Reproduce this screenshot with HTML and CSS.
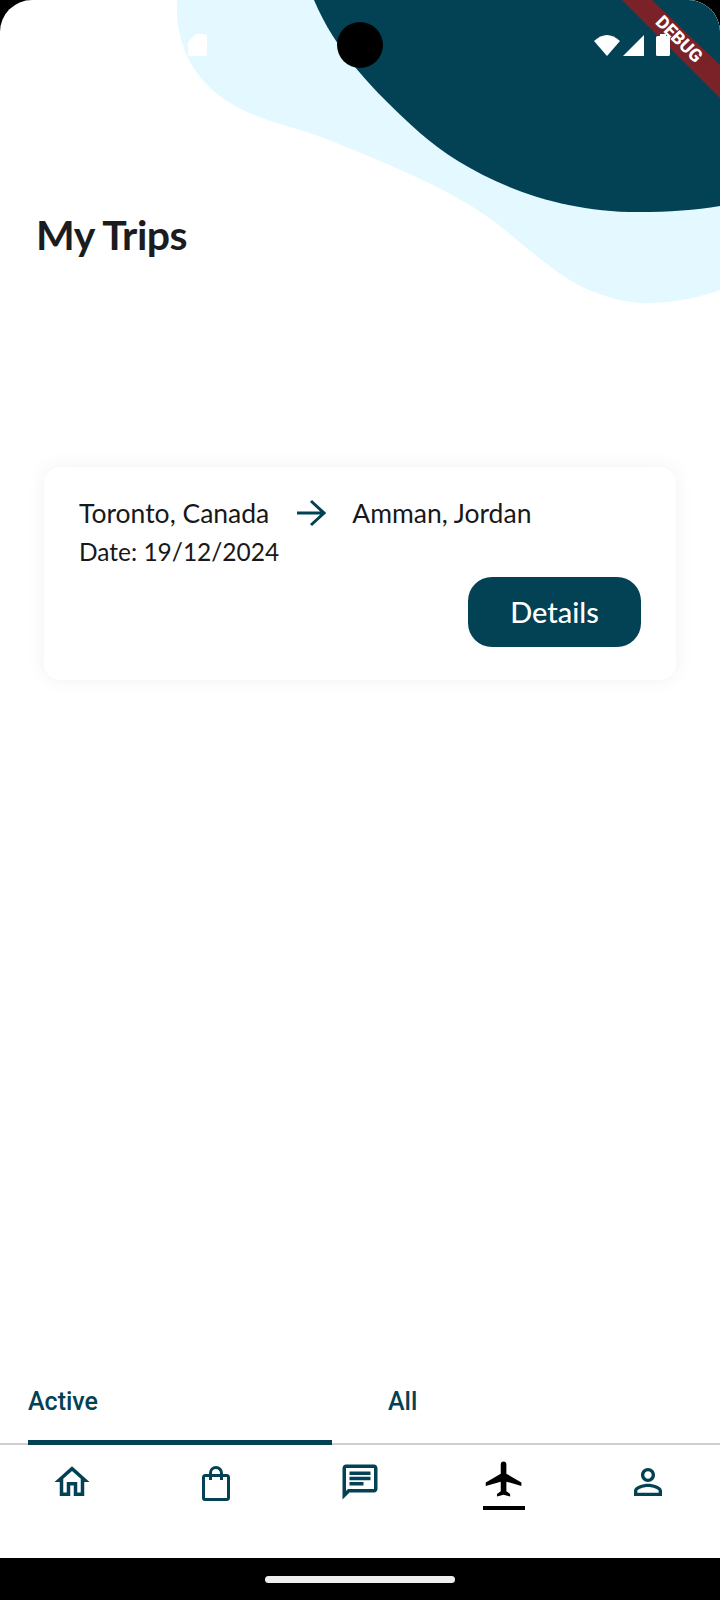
FILE: index.html
```html
<!DOCTYPE html>
<html lang="en">
<head>
<meta charset="utf-8">
<title>My Trips</title>
<link rel="stylesheet" href="styles.css">
</head>
<body>
<div class="screen">
  <svg class="blobs" viewBox="0 0 720 310" aria-hidden="true">
    <path class="blob-light" d="M177 0C175 40 190 85 243 110C270 123 295 127 321 137C380 160 440 185 482 213C510 232 530 252 551 267C568 280 582 288 597 293C615 300 635 304 652 303C680 302 700 297 720 290V0Z"/>
    <path class="blob-dark" d="M314 0C335 50 372 90 420 133C462 170 540 212 638 212C670 212 695 210 720 206V0Z"/>
  </svg>

  <div class="banner-band"></div>
  <span class="banner-text">DEBUG</span>

  <div class="status">
    <svg class="st-sd" viewBox="0 0 19 22"><path d="M8 0H17a2 2 0 0 1 2 2V20a2 2 0 0 1-2 2H2a2 2 0 0 1-2-2V8Z"/></svg>
    <span class="camera"></span>
    <svg class="st-wifi" viewBox="0 0 26 22"><path d="M0 7Q13 -5 26 7L13 22Z"/></svg>
    <svg class="st-signal" viewBox="0 0 21 21"><path d="M21 0V21H0Z"/></svg>
    <svg class="st-battery" viewBox="0 0 14 22"><path d="M4 0H10V2H12.5A1.5 1.5 0 0 1 14 3.5V20.5A1.5 1.5 0 0 1 12.5 22H1.5A1.5 1.5 0 0 1 0 20.5V3.5A1.5 1.5 0 0 1 1.5 2H4Z"/></svg>
  </div>

  <header class="head">
    <h1 class="title">My Trips</h1>
  </header>

  <section class="card">
    <div class="route">
      <span class="city">Toronto, Canada</span>
      <svg class="arrow" viewBox="0 0 30 28"><path d="M1 14H28M15 2L28 14L15 26"/></svg>
      <span class="city">Amman, Jordan</span>
    </div>
    <div class="date">Date: 19/12/2024</div>
    <div class="actions"><button class="details">Details</button></div>
  </section>

  <div class="spacer"></div>

  <nav class="tabs">
    <div class="tab tab-active">Active</div>
    <div class="tab tab-all">All</div>
  </nav>

  <nav class="bottom">
    <div class="item">
      <svg class="ico ico-home" viewBox="0 0 24 24"><path d="M12 5.69l5 4.5V18h-2v-6H9v6H7v-7.81l5-4.5M12 3L2 12h3v8h6v-6h2v6h6v-8h3L12 3z"/></svg>
    </div>
    <div class="item">
      <svg class="ico-bag" viewBox="0 0 28 35"><path d="M3 9.5H25A1.5 1.5 0 0 1 26.5 11V32A1.5 1.5 0 0 1 25 33.5H3A1.5 1.5 0 0 1 1.5 32V11A1.5 1.5 0 0 1 3 9.5ZM8.5 14V7A5.5 5.5 0 0 1 19.5 7V14"/></svg>
    </div>
    <div class="item">
      <svg class="ico ico-chat" viewBox="0 0 24 24"><path d="M4 4h16v12H5.17L4 17.17V4m0-2c-1.1 0-1.99.9-1.99 2L2 22l4-4h14c1.1 0 2-.9 2-2V4c0-1.1-.9-2-2-2H4zm2 10h8v2H6v-2zm0-3h12v2H6V9zm0-3h12v2H6V6z"/></svg>
    </div>
    <div class="item item-active">
      <svg class="ico-plane" viewBox="0 0 24 24" preserveAspectRatio="none"><path d="M21 16v-2l-8-5V3.5c0-.83-.67-1.5-1.5-1.5S10 2.67 10 3.5V9l-8 5v2l8-2.5V19l-2 1.5V22l3.5-1 3.5 1v-1.5L13 19v-5.5l8 2.5z"/></svg>
      <span class="underline"></span>
    </div>
    <div class="item">
      <svg class="ico ico-person" viewBox="0 0 24 24"><path d="M12 5.9c1.16 0 2.1.94 2.1 2.1s-.94 2.1-2.1 2.1S9.9 9.16 9.9 8s.94-2.1 2.1-2.1m0 9c2.97 0 6.1 1.46 6.1 2.1v1.1H5.9V17c0-.64 3.13-2.1 6.1-2.1M12 4C9.79 4 8 5.79 8 8s1.79 4 4 4 4-1.79 4-4-1.79-4-4-4zm0 9c-2.67 0-8 1.34-8 4v3h16v-3c0-2.66-5.33-4-8-4z"/></svg>
    </div>
  </nav>

  <div class="gesture"><span class="pill"></span></div>
</div>
</body>
</html>
```

FILE: styles.css
```css
* { box-sizing: border-box; }

html, body {
  margin: 0;
  background: #000;
}

.screen {
  position: relative;
  display: flex;
  flex-direction: column;
  width: 720px;
  height: 1600px;
  background: #fff;
  border-radius: 32px 32px 0 0;
  overflow: hidden;
}

.blobs {
  position: absolute;
  top: 0;
  left: 0;
  width: 720px;
  height: 310px;
}
.blob-light { fill: #e3f8ff; }
.blob-dark { fill: #024254; }

.status {
  position: absolute;
  top: 0;
  left: 0;
  width: 720px;
  height: 90px;
  display: flex;
  align-items: center;
  padding-left: 188px;
}
.status svg { fill: #fff; display: block; }
.st-sd { width: 19px; height: 22px; }
.camera {
  width: 46px;
  height: 46px;
  margin-left: 130px;
  border-radius: 50%;
  background: #000;
}
.st-wifi { width: 26px; height: 22px; margin-left: 211px; }
.st-signal { width: 21px; height: 21px; margin-left: 3px; }
.st-battery { width: 14px; height: 22px; margin-left: 12px; }

.banner-band {
  position: absolute;
  top: 0;
  right: 0;
  width: 98px;
  height: 98px;
  background: #7a2228;
  clip-path: polygon(0 0, 30px 0, 98px 65px, 98px 98px);
}
.banner-text {
  position: absolute;
  top: 29px;
  left: 644px;
  width: 70px;
  text-align: center;
  color: #fff;
  font: 800 18px/20px "Roboto", sans-serif;
  transform: rotate(45deg);
}

.head {
  position: relative;
  height: 467px;
  padding: 211px 0 0 36px;
}
.title {
  margin: 0;
  font: 700 41px/48px "Lato", sans-serif;
  letter-spacing: -0.5px;
  color: #1b1c20;
}

.card {
  position: relative;
  width: 632px;
  height: 213px;
  margin-left: 44px;
  padding: 27px 35px 0;
  background: #fff;
  border-radius: 16px;
  box-shadow: 0 0 20px rgba(0, 0, 0, 0.06);
  color: #17181c;
  font: 400 26.5px/38px "Lato", sans-serif;
}
.route {
  display: flex;
  align-items: center;
  height: 38px;
}
.arrow {
  width: 30px;
  height: 28px;
  margin: 0 26px 0 27px;
  fill: none;
  stroke: #024254;
  stroke-width: 3;
}
.date { height: 38px; margin-top: 1px; font-size: 24.5px; }
.actions {
  display: flex;
  justify-content: flex-end;
  margin-top: 6px;
}
.details {
  width: 173px;
  height: 70px;
  border: 0;
  border-radius: 24px;
  background: #024254;
  color: #fff;
  font: 500 29px/34px "Lato", sans-serif;
}

.spacer { flex: 1; }

.tabs {
  display: flex;
  height: 93px;
  padding: 0 0 0 28px;
  border-bottom: 2px solid #cfcfd2;
  color: #024254;
  font: 500 25px/28px "Roboto", sans-serif;
}
.tab {
  width: 304px;
  height: 93px;
  padding-top: 36px;
}
.tab-active { border-bottom: 5px solid #024254; }
.tab-all { padding-left: 56px; }

.bottom {
  display: flex;
  height: 113px;
  background: #fff;
}
.item {
  flex: 1;
  display: flex;
  flex-direction: column;
  align-items: center;
  padding-top: 16px;
}
.ico {
  display: block;
  width: 42px;
  height: 42px;
  fill: #024254;
}
.ico-bag {
  display: block;
  width: 28px;
  height: 35px;
  margin-top: 5px;
  fill: none;
  stroke: #024254;
  stroke-width: 3;
}
.item-active { padding-top: 13px; }
.ico-plane {
  display: block;
  width: 45px;
  height: 42px;
  fill: #000;
}
.underline {
  width: 42px;
  height: 4px;
  margin-top: 6px;
  background: #000;
}

.gesture {
  display: flex;
  justify-content: center;
  height: 42px;
  padding-top: 18px;
  background: #000;
}
.pill {
  width: 190px;
  height: 7px;
  border-radius: 4px;
  background: #eeeeee;
}
```
